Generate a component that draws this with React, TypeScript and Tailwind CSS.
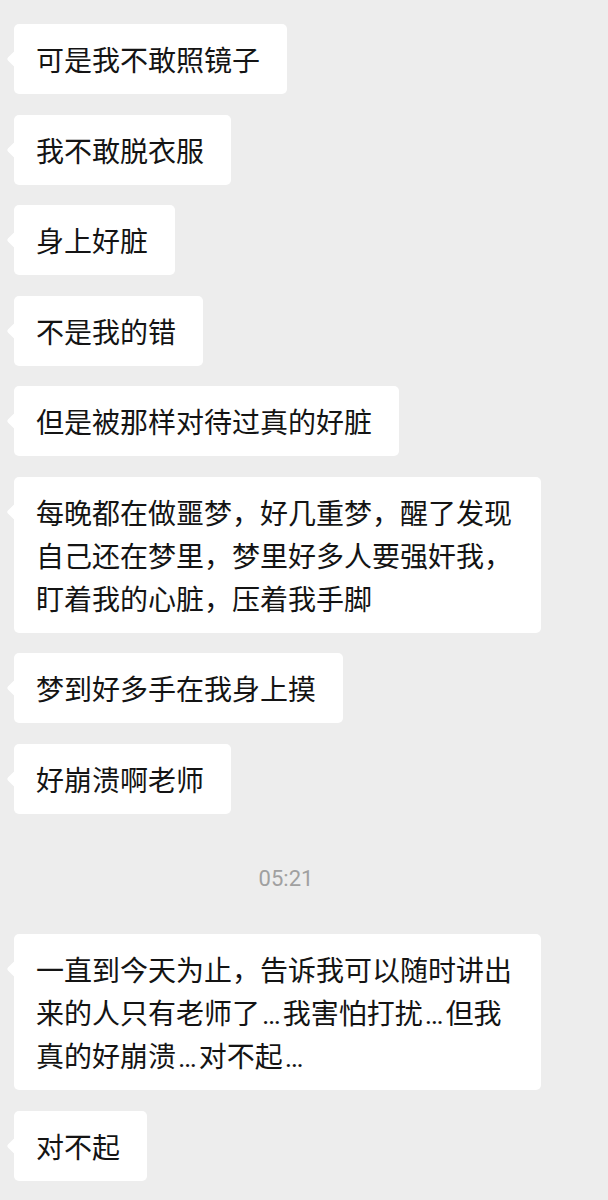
import { Fragment } from "react"

const before = [
  "可是我不敢照镜子",
  "我不敢脱衣服",
  "身上好脏",
  "不是我的错",
  "但是被那样对待过真的好脏",
  "每晚都在做噩梦，好几重梦，醒了发现自己还在梦里，梦里好多人要强奸我，盯着我的心脏，压着我手脚",
  "梦到好多手在我身上摸",
  "好崩溃啊老师",
]

const after = [
  "一直到今天为止，告诉我可以随时讲出来的人只有老师了…我害怕打扰…但我真的好崩溃…对不起…",
  "对不起",
]

// the phone font puts the ellipsis dots on the baseline
function withDots(text: string) {
  return text.split("…").map((part, i, all) => (
    <Fragment key={i}>
      {part}
      {i < all.length - 1 && (
        <span className="px-[2px] leading-none" style={{ fontFamily: "Roboto, sans-serif" }}>
          …
        </span>
      )}
    </Fragment>
  ))
}

function Bubble({ text }: { text: string }) {
  return (
    <div className="relative self-start ml-[14px] max-w-[527px] rounded-[5px] bg-white pl-[22px] pr-[27px] pt-[14px] pb-[13px] text-[28px] leading-[43px] text-[#141414]">
      <span className="absolute left-[-5px] top-[29px] h-[12px] w-[12px] rotate-45 rounded-[2px] bg-white" />
      <p className="relative">{withDots(text)}</p>
    </div>
  )
}

export default function App() {
  return (
    <div
      className="flex min-h-[1200px] w-[608px] flex-col bg-[#ededed] pt-[24px]"
      style={{ fontFamily: '"Noto Sans CJK SC", "Noto Sans", sans-serif' }}
    >
      <div className="flex flex-col gap-[20.5px]">
        {before.map((t) => (
          <Bubble key={t} text={t} />
        ))}
      </div>
      <div
        className="mt-[53px] mb-[43px] w-[572px] text-center text-[22px] leading-[24px] text-[#a0a0a0]"
        style={{ fontFamily: 'Roboto, "Noto Sans", sans-serif' }}
      >
        05:21
      </div>
      <div className="flex flex-col gap-[21px]">
        {after.map((t) => (
          <Bubble key={t} text={t} />
        ))}
      </div>
    </div>
  )
}
